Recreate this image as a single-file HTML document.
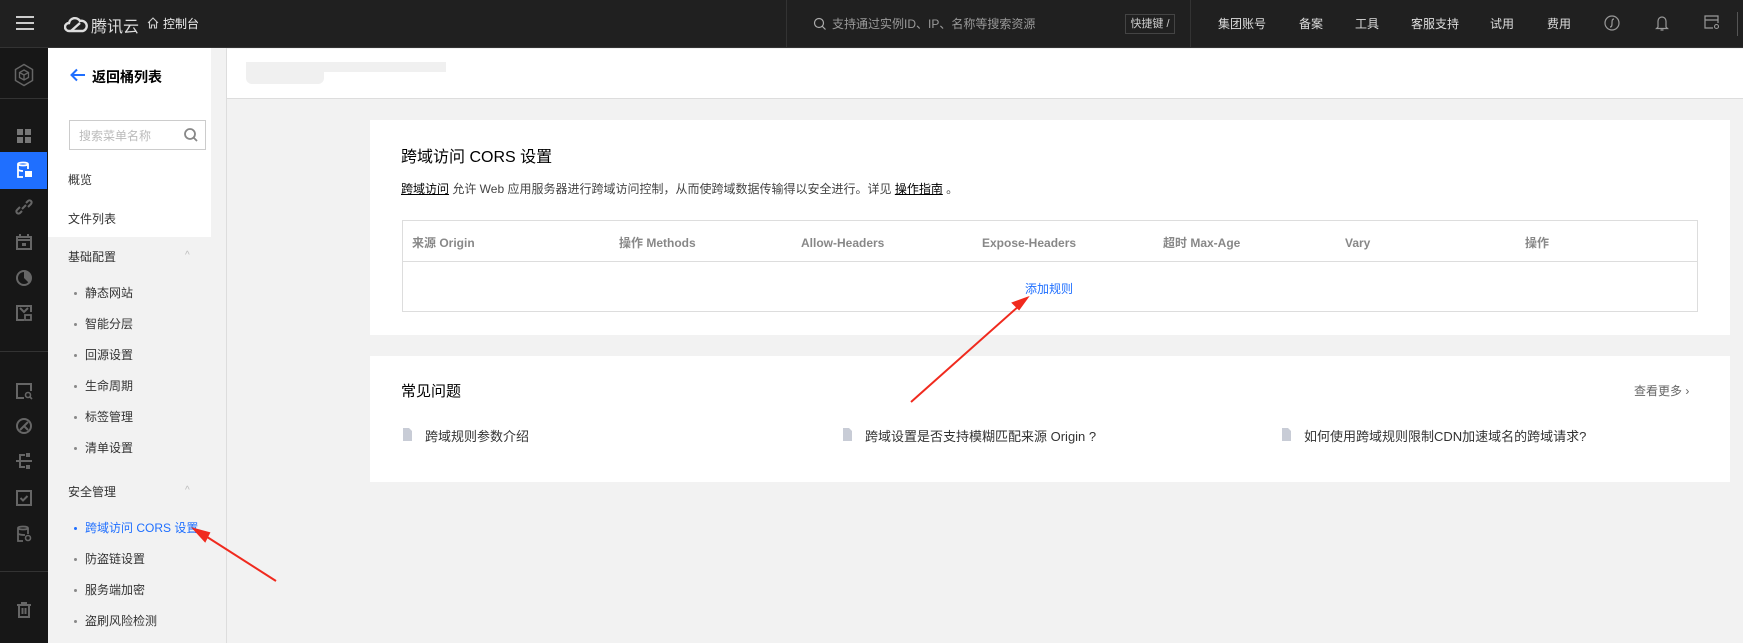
<!DOCTYPE html>
<html><head><meta charset="utf-8"><style>
*{margin:0;padding:0;box-sizing:border-box}
body{width:1743px;height:643px;overflow:hidden;background:#f2f2f2;font-family:"Liberation Sans","Noto Sans CJK SC",sans-serif;font-size:12px;color:#333;position:relative}
.a{position:absolute}
.hd{left:0;top:0;width:1743px;height:48px;background:#202020;border-bottom:1px solid #333}
.t{color:#ddd;font-size:12px;top:16px;line-height:16px}
.ib{left:0;top:48px;width:48px;height:595px;background:#171717}
.ic{left:14px;width:20px;height:20px}
.sb{left:48px;top:48px;width:163px;height:595px;background:#fff}
.sg{left:48px;top:237px;width:163px;height:406px;background:#f2f2f2}
.si{font-size:12px;color:#333}
.dot{width:3px;height:3px;background:#888;border-radius:50%}
.card{background:#fff}
.th{top:235px;font-weight:bold;color:#888;font-size:12px;line-height:16px}
</style></head><body>
<div class="a hd"></div>
<div class="a" style="left:16px;top:16px;width:18px;height:2px;background:#ccc;box-shadow:0 6px 0 #ccc,0 12px 0 #ccc"></div>
<svg class="a" style="left:64px;top:14px" width="24" height="20" viewBox="0 0 24 20"><path d="M5 17a4 4 0 0 1 0-8a6 6 0 0 1 11-2a5 5 0 0 1 3 10z" fill="none" stroke="#ddd" stroke-width="2.4"/><path d="M7 17l9-8" stroke="#ddd" stroke-width="2.4"/></svg>
<div class="a" style="left:91px;top:13px;color:#ddd;font-size:16px">腾讯云</div>
<svg class="a" style="left:147px;top:17px" width="12" height="12" viewBox="0 0 12 12"><path d="M1 6L6 1l5 5M2.5 5v6h2V8h3v3h2V5" fill="none" stroke="#ccc" stroke-width="1.1"/></svg>
<div class="a t" style="left:163px;color:#eee">控制台</div>
<div class="a" style="left:786px;top:0;width:1px;height:48px;background:#333"></div>
<svg class="a" style="left:813px;top:17px" width="14" height="14" viewBox="0 0 14 14"><circle cx="6" cy="6" r="4.5" fill="none" stroke="#aaa" stroke-width="1.2"/><path d="M9.3 9.3L12.5 12.5" stroke="#aaa" stroke-width="1.2"/></svg>
<div class="a t" style="left:832px;color:#999">支持通过实例ID、IP、名称等搜索资源</div>
<div class="a" style="left:1125px;top:14px;width:50px;height:20px;border:1px solid #444;color:#ccc;font-size:11px;text-align:center;line-height:18px">快捷键 /</div>
<div class="a" style="left:1190px;top:0;width:1px;height:48px;background:#333"></div>
<div class="a t" style="left:1218px">集团账号</div>
<div class="a t" style="left:1299px">备案</div>
<div class="a t" style="left:1355px">工具</div>
<div class="a t" style="left:1411px">客服支持</div>
<div class="a t" style="left:1490px">试用</div>
<div class="a t" style="left:1547px">费用</div>
<svg class="a" style="left:1604px;top:15px" width="16" height="16" viewBox="0 0 16 16"><circle cx="8" cy="8" r="7" fill="none" stroke="#999" stroke-width="1.2"/><path d="M6 12c2 0 2-2 2-4s0-4 2-4" fill="none" stroke="#999" stroke-width="1.2"/></svg>
<svg class="a" style="left:1655px;top:14px" width="14" height="18" viewBox="0 0 14 18"><path d="M3 13V7a4 4 0 0 1 8 0v6l1.5 1.5h-11zM5.5 16h3" fill="none" stroke="#999" stroke-width="1.2"/></svg>
<svg class="a" style="left:1704px;top:15px" width="16" height="15" viewBox="0 0 16 15"><path d="M9 13H1V1h13v7M1 5h13" fill="none" stroke="#999" stroke-width="1.2"/><circle cx="12.5" cy="11.5" r="2" fill="none" stroke="#999" stroke-width="1.1"/></svg>
<div class="a" style="left:1737px;top:12px;width:1px;height:24px;background:#555"></div>

<div class="a ib"></div>
<div class="a" style="left:0;top:98px;width:48px;height:1px;background:#333"></div>
<div class="a" style="left:0;top:351px;width:48px;height:1px;background:#333"></div>
<div class="a" style="left:0;top:571px;width:48px;height:1px;background:#333"></div>
<svg class="a" style="left:13px;top:63px" width="22" height="24" viewBox="0 0 22 24"><path d="M11 1.5l8.5 5v11L11 22.5l-8.5-5v-11z" fill="none" stroke="#666" stroke-width="1.5"/><path d="M11 7l4.5 2.5v5L11 17l-4.5-2.5v-5zM6.5 9.5L11 12l4.5-2.5M11 12v5" fill="none" stroke="#666" stroke-width="1.3"/></svg>
<div class="a" style="left:0;top:152px;width:47px;height:37px;background:#1f6fff"></div>
<svg class="a ic" style="top:126px" viewBox="0 0 20 20"><rect x="3" y="3" width="6" height="6" fill="#777"/><rect x="11" y="3" width="6" height="6" fill="#777"/><rect x="3" y="11" width="6" height="6" fill="#777"/><rect x="11" y="11" width="6" height="6" fill="#777"/></svg>
<svg class="a ic" style="top:160px" viewBox="0 0 20 20"><path d="M9 17H4V4c0-2 10-2 10 0v5M4 4c0 2 10 2 10 0M4 9c0 2 5 2 5 2" fill="none" stroke="#fff" stroke-width="1.8"/><rect x="11" y="11" width="7" height="6" fill="#fff"/></svg>
<svg class="a ic" style="top:197px" viewBox="0 0 20 20"><path d="M8 14l-2 2a2 2 0 0 1-3-3l3-3M12 6l2-2a2 2 0 0 1 3 3l-3 3M8 12l4-4" fill="none" stroke="#666" stroke-width="2"/></svg>
<svg class="a ic" style="top:232px" viewBox="0 0 20 20"><path d="M3 5h14v12H3zM6 2v4M14 2v4M3 8h14" fill="none" stroke="#666" stroke-width="2"/><rect x="8" y="11" width="4" height="3" fill="#666"/></svg>
<svg class="a ic" style="top:268px" viewBox="0 0 20 20"><circle cx="10" cy="10" r="7" fill="none" stroke="#666" stroke-width="2"/><path d="M10 3v7l5 5a7 7 0 0 0-5-12z" fill="#666"/></svg>
<svg class="a ic" style="top:303px" viewBox="0 0 20 20"><path d="M10 17H3V3h14v6M6 5l4 4 4-4" fill="none" stroke="#666" stroke-width="2"/><rect x="11" y="12" width="6" height="5" fill="none" stroke="#666" stroke-width="1.8"/></svg>
<svg class="a ic" style="top:381px" viewBox="0 0 20 20"><path d="M10 17H3V3h14v7" fill="none" stroke="#666" stroke-width="2"/><circle cx="14" cy="14" r="2.5" fill="none" stroke="#666" stroke-width="1.6"/><path d="M16 16l2 2" stroke="#666" stroke-width="1.6"/></svg>
<svg class="a ic" style="top:416px" viewBox="0 0 20 20"><circle cx="10" cy="10" r="7" fill="none" stroke="#666" stroke-width="2"/><path d="M6 14l8-8M10 10l4 4" stroke="#666" stroke-width="2"/></svg>
<svg class="a ic" style="top:451px" viewBox="0 0 20 20"><path d="M2 10h16M6 10V4h5M6 10v6h5" fill="none" stroke="#666" stroke-width="2"/><rect x="12" y="2" width="4" height="4" fill="#666"/><rect x="12" y="14" width="4" height="4" fill="#666"/></svg>
<svg class="a ic" style="top:488px" viewBox="0 0 20 20"><path d="M3 3h14v14H3zM6.5 10l2.5 2.5 4.5-4.5" fill="none" stroke="#666" stroke-width="2"/></svg>
<svg class="a ic" style="top:524px" viewBox="0 0 20 20"><path d="M9 17H4V4c0-2 10-2 10 0v6M4 4c0 2 10 2 10 0M4 9c0 2 7 2 7 2" fill="none" stroke="#666" stroke-width="1.8"/><circle cx="14" cy="14" r="2.5" fill="none" stroke="#666" stroke-width="1.6"/></svg>
<svg class="a ic" style="top:600px" viewBox="0 0 20 20"><path d="M3 5h14M8 5V3h4v2M5 5v12h10V5M8.5 8v6M11.5 8v6" fill="none" stroke="#666" stroke-width="2"/></svg>

<div class="a sb"></div>
<div class="a sg"></div>
<div class="a" style="left:216px;top:115px;width:10px;height:528px;background:#f2f2f2;border-radius:5px"></div>
<div class="a" style="left:226px;top:48px;width:1px;height:595px;background:#ddd"></div>
<svg class="a" style="left:70px;top:68px" width="16" height="14" viewBox="0 0 16 14"><path d="M15 7H2M7 1.5L1.5 7 7 12.5" fill="none" stroke="#1f6fff" stroke-width="2"/></svg>
<div class="a" style="left:92px;top:67px;font-size:14px;font-weight:bold;color:#000">返回桶列表</div>
<div class="a" style="left:69px;top:120px;width:137px;height:30px;border:1px solid #ccc;background:#fff"></div>
<div class="a" style="left:79px;top:127px;color:#bbb;font-size:12px">搜索菜单名称</div>
<svg class="a" style="left:183px;top:127px" width="16" height="16" viewBox="0 0 16 16"><circle cx="7" cy="7" r="5" fill="none" stroke="#888" stroke-width="1.8"/><path d="M10.5 10.5L14 14" stroke="#888" stroke-width="1.8"/></svg>
<div class="a si" style="left:68px;top:171px">概览</div>
<div class="a si" style="left:68px;top:210px">文件列表</div>
<div class="a si" style="left:68px;top:248px">基础配置</div>
<div class="a" style="left:185px;top:250px;color:#bbb;font-size:10px">^</div>
<div class="a si" style="left:68px;top:483px">安全管理</div>
<div class="a" style="left:185px;top:485px;color:#bbb;font-size:10px">^</div>
<div class="a dot" style="left:74px;top:292px"></div><div class="a si" style="left:85px;top:284px">静态网站</div>
<div class="a dot" style="left:74px;top:323px"></div><div class="a si" style="left:85px;top:315px">智能分层</div>
<div class="a dot" style="left:74px;top:354px"></div><div class="a si" style="left:85px;top:346px">回源设置</div>
<div class="a dot" style="left:74px;top:385px"></div><div class="a si" style="left:85px;top:377px">生命周期</div>
<div class="a dot" style="left:74px;top:416px"></div><div class="a si" style="left:85px;top:408px">标签管理</div>
<div class="a dot" style="left:74px;top:447px"></div><div class="a si" style="left:85px;top:439px">清单设置</div>
<div class="a dot" style="left:74px;top:527px;background:#1f6fff"></div><div class="a si" style="left:85px;top:519px;color:#1f6fff">跨域访问 CORS 设置</div>
<div class="a dot" style="left:74px;top:558px"></div><div class="a si" style="left:85px;top:550px">防盗链设置</div>
<div class="a dot" style="left:74px;top:589px"></div><div class="a si" style="left:85px;top:581px">服务端加密</div>
<div class="a dot" style="left:74px;top:620px"></div><div class="a si" style="left:85px;top:612px">盗刷风险检测</div>

<div class="a" style="left:227px;top:49px;width:1516px;height:50px;background:#fff;border-bottom:1px solid #ddd"></div>
<div class="a" style="left:246px;top:62px;width:200px;height:10px;background:#f0f0f0"></div>
<div class="a" style="left:246px;top:64px;width:78px;height:20px;background:#f0f0f0;border-radius:6px"></div>

<div class="a card" style="left:370px;top:120px;width:1360px;height:215px"></div>
<div class="a" style="left:401px;top:143px;font-size:16px;color:#000">跨域访问 CORS 设置</div>
<div class="a" style="left:401px;top:180px;font-size:12px;color:#444"><u style="color:#000">跨域访问</u> 允许 Web 应用服务器进行跨域访问控制，从而使跨域数据传输得以安全进行。详见 <u style="color:#000">操作指南</u> 。</div>
<div class="a" style="left:402px;top:220px;width:1296px;height:92px;border:1px solid #ddd"></div>
<div class="a" style="left:402px;top:261px;width:1296px;height:1px;background:#ddd"></div>
<div class="a th" style="left:412px">来源 Origin</div>
<div class="a th" style="left:619px">操作 Methods</div>
<div class="a th" style="left:801px">Allow-Headers</div>
<div class="a th" style="left:982px">Expose-Headers</div>
<div class="a th" style="left:1163px">超时 Max-Age</div>
<div class="a th" style="left:1345px">Vary</div>
<div class="a th" style="left:1525px">操作</div>
<div class="a" style="left:1025px;top:280px;color:#1f6fff;font-size:12px">添加规则</div>

<div class="a card" style="left:370px;top:356px;width:1360px;height:126px"></div>
<div class="a" style="left:401px;top:380px;font-size:15px;color:#000">常见问题</div>
<div class="a" style="left:1634px;top:382px;font-size:12px;color:#666">查看更多 ›</div>
<svg class="a" style="left:403px;top:428px" width="9" height="13"><path d="M0 0h6l3 3v10H0z" fill="#c8ccd6"/></svg>
<div class="a" style="left:425px;top:426px;font-size:13px;color:#333">跨域规则参数介绍</div>
<svg class="a" style="left:843px;top:428px" width="9" height="13"><path d="M0 0h6l3 3v10H0z" fill="#c8ccd6"/></svg>
<div class="a" style="left:865px;top:426px;font-size:13px;color:#333">跨域设置是否支持模糊匹配来源 Origin ?</div>
<svg class="a" style="left:1282px;top:428px" width="9" height="13"><path d="M0 0h6l3 3v10H0z" fill="#c8ccd6"/></svg>
<div class="a" style="left:1304px;top:426px;font-size:13px;color:#333">如何使用跨域规则限制CDN加速域名的跨域请求?</div>

<svg class="a" style="left:0;top:0" width="1743" height="643"><g stroke="#f02a1e" stroke-width="2" fill="#f02a1e"><path d="M911 402L1020 305"/><path d="M1027 298l-14 5 6 6z"/><path d="M276 581L204 535"/><path d="M194 529l11 12 4-8z"/></g></svg>
</body></html>
